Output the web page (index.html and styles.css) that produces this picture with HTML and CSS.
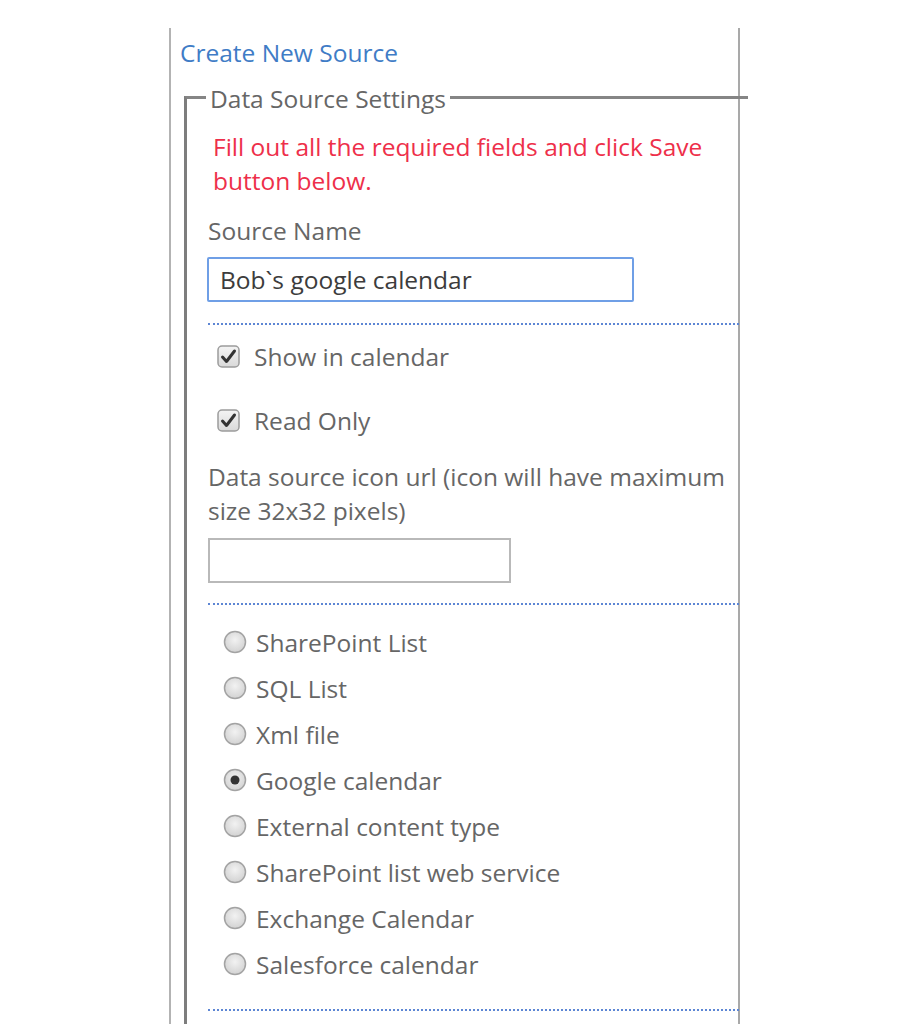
FILE: index.html
```html
<!DOCTYPE html>
<html>
<head>
<meta charset="utf-8">
<title>Create New Source</title>
<link rel="stylesheet" href="styles.css">
</head>
<body>
<div class="page">
  <div class="panel">
    <div class="title"><a class="link" href="#">Create New Source</a></div>
    <fieldset class="settings">
      <legend class="legend">Data Source Settings</legend>
      <div class="error">Fill out all the required fields and click Save button below.</div>
      <div class="label name-label">Source Name</div>
      <div class="input focused">Bob`s google calendar</div>
      <div class="sep sep1"></div>
      <div class="check-row first">
        <svg class="cb" width="23" height="23" viewBox="0 0 23 23"><defs><linearGradient id="g1" x1="0" y1="0" x2="0" y2="1"><stop offset="0" stop-color="#f4f4f4"/><stop offset="1" stop-color="#d9d9d9"/></linearGradient></defs><rect x="1" y="1" width="21" height="21" rx="4" fill="url(#g1)" stroke="#9c9c9c" stroke-width="1.5"/><path d="M5.5 12 L9.5 16.5 L17.5 6" fill="none" stroke="#333" stroke-width="3" stroke-linecap="round" stroke-linejoin="round"/></svg>
        <span class="opt">Show in calendar</span>
      </div>
      <div class="check-row second">
        <svg class="cb" width="23" height="23" viewBox="0 0 23 23"><rect x="1" y="1" width="21" height="21" rx="4" fill="url(#g1)" stroke="#9c9c9c" stroke-width="1.5"/><path d="M5.5 12 L9.5 16.5 L17.5 6" fill="none" stroke="#333" stroke-width="3" stroke-linecap="round" stroke-linejoin="round"/></svg>
        <span class="opt">Read Only</span>
      </div>
      <div class="label icon-label">Data source icon url (icon will have maximum size 32x32 pixels)</div>
      <div class="input plain"></div>
      <div class="sep sep2"></div>
      <div class="radios">
        <div class="radio-row"><svg class="rb" width="24" height="24" viewBox="0 0 24 24"><defs><radialGradient id="rg" cx="0.5" cy="0.4" r="0.6"><stop offset="0" stop-color="#f2f2f2"/><stop offset="1" stop-color="#d2d2d2"/></radialGradient></defs><circle cx="12" cy="12" r="10.5" fill="url(#rg)" stroke="#a3a3a3" stroke-width="1.5"/></svg><span class="opt">SharePoint List</span></div>
        <div class="radio-row"><svg class="rb" width="24" height="24" viewBox="0 0 24 24"><circle cx="12" cy="12" r="10.5" fill="url(#rg)" stroke="#a3a3a3" stroke-width="1.5"/></svg><span class="opt">SQL List</span></div>
        <div class="radio-row"><svg class="rb" width="24" height="24" viewBox="0 0 24 24"><circle cx="12" cy="12" r="10.5" fill="url(#rg)" stroke="#a3a3a3" stroke-width="1.5"/></svg><span class="opt">Xml file</span></div>
        <div class="radio-row"><svg class="rb" width="24" height="24" viewBox="0 0 24 24"><circle cx="12" cy="12" r="10.5" fill="url(#rg)" stroke="#a3a3a3" stroke-width="1.5"/><circle cx="12" cy="12" r="4.5" fill="#333"/></svg><span class="opt">Google calendar</span></div>
        <div class="radio-row"><svg class="rb" width="24" height="24" viewBox="0 0 24 24"><circle cx="12" cy="12" r="10.5" fill="url(#rg)" stroke="#a3a3a3" stroke-width="1.5"/></svg><span class="opt">External content type</span></div>
        <div class="radio-row"><svg class="rb" width="24" height="24" viewBox="0 0 24 24"><circle cx="12" cy="12" r="10.5" fill="url(#rg)" stroke="#a3a3a3" stroke-width="1.5"/></svg><span class="opt">SharePoint list web service</span></div>
        <div class="radio-row"><svg class="rb" width="24" height="24" viewBox="0 0 24 24"><circle cx="12" cy="12" r="10.5" fill="url(#rg)" stroke="#a3a3a3" stroke-width="1.5"/></svg><span class="opt">Exchange Calendar</span></div>
        <div class="radio-row"><svg class="rb" width="24" height="24" viewBox="0 0 24 24"><circle cx="12" cy="12" r="10.5" fill="url(#rg)" stroke="#a3a3a3" stroke-width="1.5"/></svg><span class="opt">Salesforce calendar</span></div>
      </div>
      <div class="sep sep3"></div>
    </fieldset>
  </div>
</div>
</body>
</html>
```
FILE: styles.css
```css
html, body {
  margin: 0;
  padding: 0;
  background: #ffffff;
}
body {
  font-family: "Open Sans", "Noto Sans", "Liberation Sans", sans-serif;
  font-size: 24.5px;
  color: #666666;
  overflow: hidden;
}
.page {
  padding-top: 28px;
  height: 996px;
  overflow: hidden;
}
.panel {
  margin-left: 169px;
  width: 567px;
  height: 1100px;
  border-left: 2px solid #b3b3b3;
  border-right: 2px solid #a9a9a9;
}
.title {
  padding-left: 9px;
  height: 50px;
  line-height: 50px;
}
.link {
  color: #3f7cc6;
  text-decoration: none;
}
.settings {
  margin: 0 0 0 13px;
  width: 531px;
  padding: 0 9px 60px 21px;
  border: none;
  border-top: 3px solid #858585;
  border-left: 3px solid #7d7d7d;
  min-inline-size: 0;
}
.legend {
  padding: 4px 4px 0 4px;
  margin-left: -2px;
  line-height: 34px;
  color: #666666;
}
.error {
  color: #ee2f4a;
  line-height: 34px;
  padding-left: 5px;
  margin-top: 14px;
}
.label {
  line-height: 34px;
}
.name-label {
  margin-top: 16px;
}
.input {
  box-sizing: border-box;
  height: 45px;
  background: #ffffff;
  line-height: 41px;
  padding-left: 11px;
  color: #3c3c3c;
}
.focused {
  width: 427px;
  margin-top: 9px;
  margin-left: -1px;
  border: 2px solid #6f9fe6;
  border-radius: 2px;
}
.plain {
  width: 303px;
  margin-top: 10px;
  border: 2px solid #b9b9b9;
}
.sep {
  border-top: 2px dotted #5d86d4;
}
.sep1 { margin-top: 21px; }
.sep2 { margin-top: 20px; }
.sep3 { margin-top: 28px; }
.check-row {
  display: flex;
  align-items: center;
  height: 34px;
  padding-left: 9px;
  gap: 14px;
}
.check-row.first { margin-top: 14px; }
.check-row.second { margin-top: 30px; }
.cb { display: block; flex: none; }
.icon-label { margin-top: 23px; }
.radios {
  display: flex;
  flex-direction: column;
  gap: 12px;
  margin-top: 20px;
  padding-left: 15px;
}
.radio-row {
  display: flex;
  align-items: center;
  height: 34px;
  gap: 9px;
}
.rb { display: block; flex: none; }
.opt { white-space: nowrap; }
```
